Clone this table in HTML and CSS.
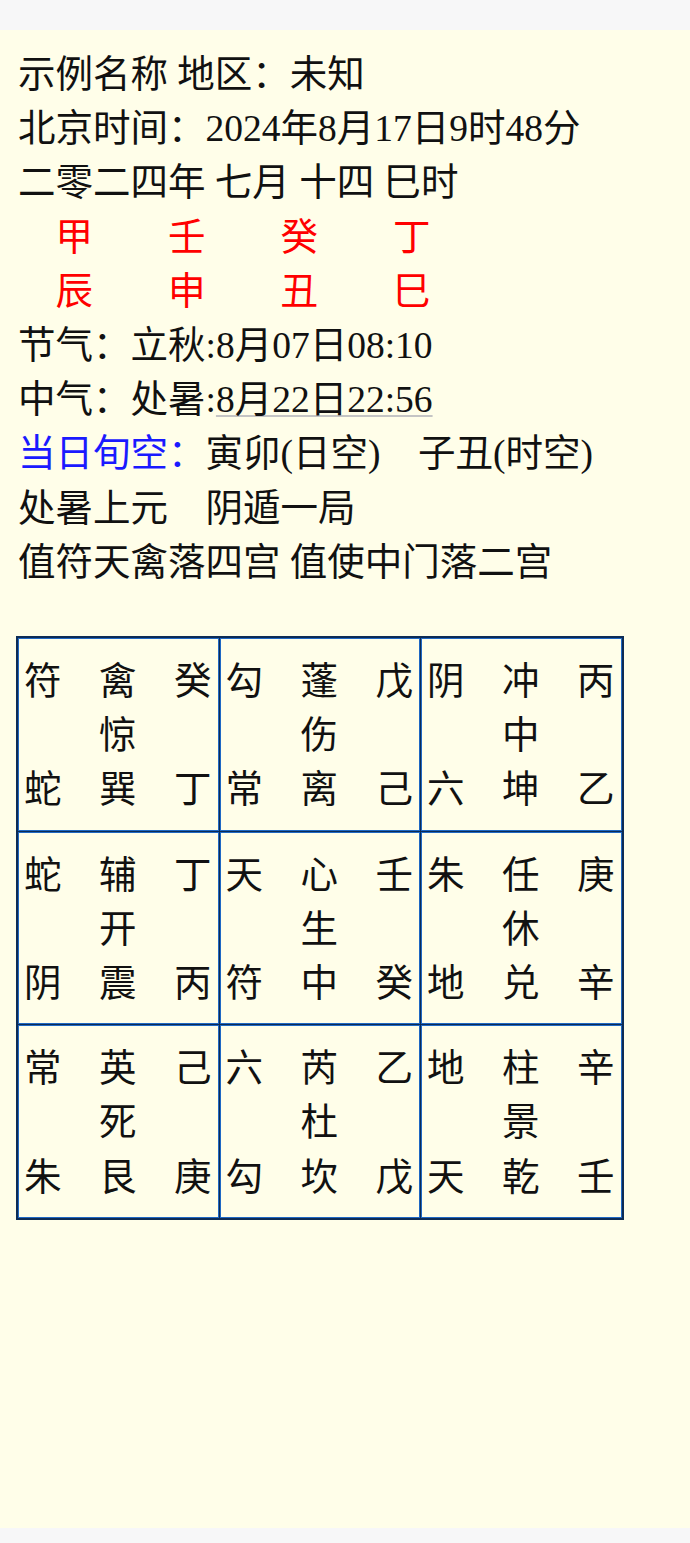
FILE: index.html
```html
<!DOCTYPE html>
<html lang="zh">
<head>
<meta charset="utf-8">
<title>奇门遁甲排盘</title>
<link rel="stylesheet" href="styles.css">
</head>
<body>
<div class="topbar"></div>
<main class="page">
  <div class="line">示例名称 地区：未知</div>
  <div class="line">北京时间：2024年8月17日9时48分</div>
  <div class="line">二零二四年 七月 十四 巳时</div>
  <div class="line red">　甲　　壬　　癸　　丁</div>
  <div class="line red">　辰　　申　　丑　　巳</div>
  <div class="line">节气：立秋:8月07日08:10</div>
  <div class="line">中气：处暑:<span class="ul">8月22日22:56</span></div>
  <div class="line"><span class="blue">当日旬空：</span>寅卯(日空)　子丑(时空)</div>
  <div class="line">处暑上元　阴遁一局</div>
  <div class="line">值符天禽落四宫 值使中门落二宫</div>

  <table class="pan">
    <tr>
      <td><div>符　禽　癸</div><div>　　惊</div><div>蛇　巽　丁</div></td>
      <td><div>勾　蓬　戊</div><div>　　伤</div><div>常　离　己</div></td>
      <td><div>阴　冲　丙</div><div>　　中</div><div>六　坤　乙</div></td>
    </tr>
    <tr>
      <td><div>蛇　辅　丁</div><div>　　开</div><div>阴　震　丙</div></td>
      <td><div>天　心　壬</div><div>　　生</div><div>符　中　癸</div></td>
      <td><div>朱　任　庚</div><div>　　休</div><div>地　兑　辛</div></td>
    </tr>
    <tr>
      <td><div>常　英　己</div><div>　　死</div><div>朱　艮　庚</div></td>
      <td><div>六　芮　乙</div><div>　　杜</div><div>勾　坎　戊</div></td>
      <td><div>地　柱　辛</div><div>　　景</div><div>天　乾　壬</div></td>
    </tr>
  </table>
</main>
</body>
</html>
```

FILE: styles.css
```css
html, body {
  margin: 0;
  padding: 0;
  background: #f7f7f8;
}

.topbar {
  height: 30px;
  background: #f7f7f8;
}

.page {
  box-sizing: border-box;
  height: 1498px;
  background: #fffee9;
  padding: 18px 0 0 18px;
  font-family: "Liberation Serif", "Noto Sans CJK SC", serif;
  font-size: 37.5px;
  line-height: 54.2px;
  color: #111;
}

.line {
  white-space: pre;
}

.red {
  color: #ff0000;
}

.blue {
  color: #1a1aff;
}

.ul {
  text-decoration: underline;
  text-decoration-color: #c4c4c4;
  text-decoration-thickness: 2px;
  text-underline-offset: 3px;
}

.pan {
  margin: 46px 0 0 -2px;
  border: 1px solid #0d2c55;
  background: #0d2c55;
  border-spacing: 1px;
  font-family: "Noto Sans CJK SC", sans-serif;
  font-size: 37.5px;
}

.pan td {
  width: 187.5px;
  padding: 12px 6px 16px 5px;
  border: 1px solid #1f68c4;
  background: #fffee9;
  vertical-align: top;
  white-space: pre;
}
```
